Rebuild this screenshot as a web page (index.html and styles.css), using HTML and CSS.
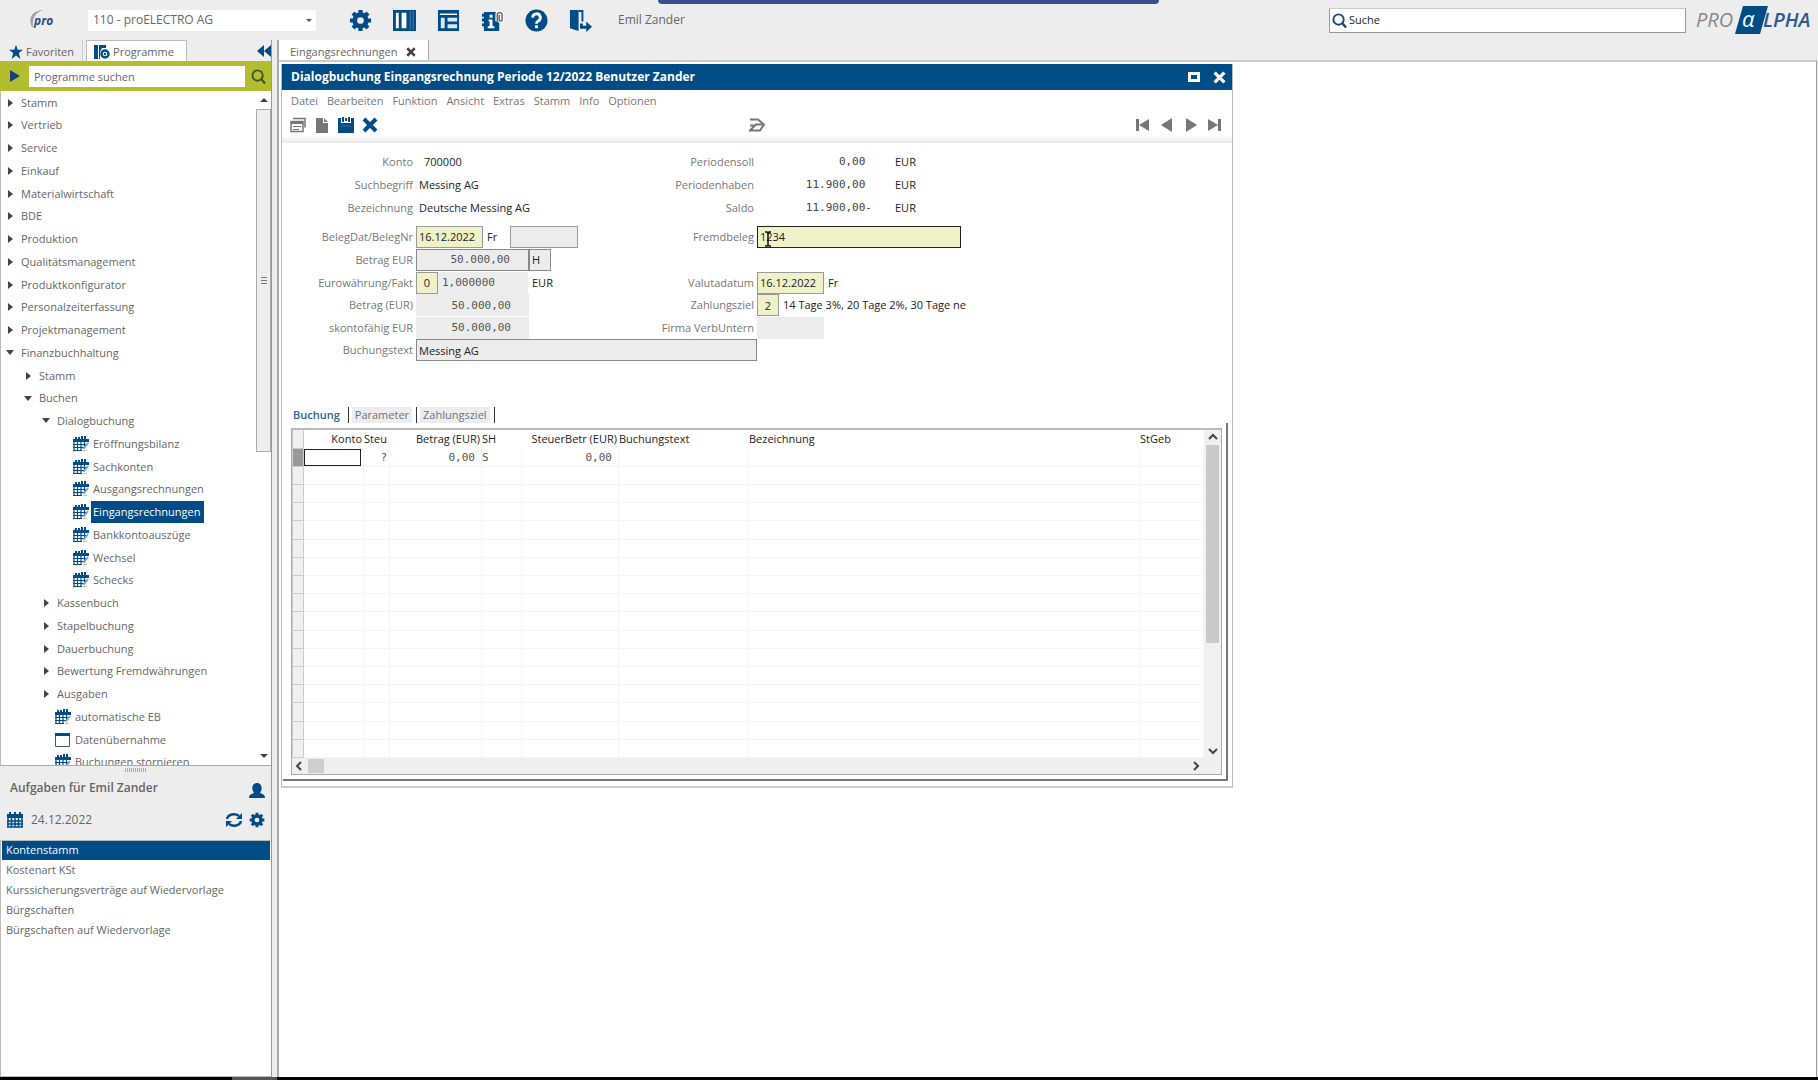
FILE: index.html
```html
<!DOCTYPE html>
<html lang="de">
<head>
<meta charset="utf-8">
<title>proALPHA – Eingangsrechnungen</title>
<link rel="stylesheet" href="styles.css">
</head>
<body>
<svg class="defs" aria-hidden="true">
  <symbol id="gear" viewBox="0 0 24 24">
    <circle cx="12" cy="12" r="6" fill="none" stroke="currentColor" stroke-width="5"/>
    <path d="M12 1v5M12 18v5M1 12h5M18 12h5M4.2 4.2l3.600 3.600M16.200 16.200l3.600 3.600M19.800 4.200l-3.600 3.600M4.200 19.800l3.600-3.600" stroke="currentColor" stroke-width="4.400"/>
  </symbol>
  <symbol id="calpen" viewBox="0 0 16 16">
    <path d="M0 3h16v3H0zM2 1h2v2H2zM5 1h2v2H5zM8 0h2v3H8zM11 0h2v3h-2z" fill="#004c86"/>
    <path d="M1 6v9M4.500 6v9M8 6v9M11.500 6v5M0 8.500h15M0 11.500h12M0 14.500h9" stroke="#004c86" stroke-width="1.200"/>
    <path d="M10.500 13l4.500-6" stroke="#7fa8d8" stroke-width="2"/>
    <path d="M10 15l4-1" stroke="#e0b070"/>
  </symbol>
  <symbol id="calendar" viewBox="0 0 16 16">
    <path d="M0 2h16v4H0zM2 0h2v3H2zM7 0h2v3H7zM12 0h2v3h-2z" fill="#004c86"/>
    <path d="M1 6v9.500M4.500 6v9.500M8 6v9.500M11.500 6v9.500M15 6v9.500M0 9h16M0 12h16M0 15h16" stroke="#004c86" stroke-width="1.500"/>
  </symbol>
  <symbol id="lens" viewBox="0 0 16 16">
    <circle cx="7" cy="7" r="5.500" fill="none" stroke="currentColor" stroke-width="2"/>
    <path d="M11 11l4 4.500" stroke="currentColor" stroke-width="2.500"/>
  </symbol>
  <symbol id="cross" viewBox="0 0 16 16">
    <path d="M2 2l12 12M14 2L2 14" stroke="currentColor" stroke-width="4"/>
  </symbol>
</svg>

<div class="capture-strip"></div>

<header class="topbar">
  <svg class="pro-logo" viewBox="0 0 30 22" role="img" aria-label="pro">
    <path d="M4 18C0 10 3 2 15 1C7 4 4 9 5 18z" fill="#9aa3ab"/>
    <text x="6" y="16" class="pro-text">pro</text>
  </svg>
  <div class="company">
    <select aria-label="Firma"><option>110 - proELECTRO AG</option></select>
  </div>
  <nav class="top-icons" aria-label="Werkzeuge">
    <button aria-label="Einstellungen"><svg viewBox="0 0 24 24"><use href="#gear"/></svg></button>
    <button aria-label="Spaltenansicht"><svg viewBox="0 0 24 24"><path d="M0 1h24v22H0z" fill="#004c86"/><path d="M3 4h3v16H3zM9 4h5v16H9z" fill="#fff"/><path d="M18 2v20M21 2v20" stroke="#4f7ea8"/></svg></button>
    <button aria-label="Layout"><svg viewBox="0 0 24 24"><path d="M1 1h22v22H1z" fill="#004c86"/><path d="M3 5.500h18" stroke="#fff" stroke-width="1.500"/><path d="M4 9h4v11H4zM11 9h10v4H11zM11 16h10v4H11z" fill="#dce7f0"/></svg></button>
    <button aria-label="Information"><svg viewBox="0 0 24 24"><path d="M3 3h16v20H3zM1 5h3v3H1zM1 10h3v3H1zM1 15h3v3H1z" fill="#004c86"/><path d="M8 11h4v7h2v2H7v-2h2v-5H8zM9 6h3v3H9z" fill="#fff"/><path d="M17 13V5a3 3 0 0 1 5 0v7a2 2 0 0 1-3 0V6" fill="none" stroke="#fff" stroke-width="4"/><path d="M17 13V5a3 3 0 0 1 5 0v7a2 2 0 0 1-3 0V6" fill="none" stroke="#666" stroke-width="1.500"/></svg></button>
    <button aria-label="Hilfe"><svg viewBox="0 0 24 24"><circle cx="12" cy="12" r="11.500" fill="#004c86"/><path d="M8 9a4 4 0 1 1 5.500 3.700C12 13.500 12 14 12 15.500" fill="none" stroke="#fff" stroke-width="3"/><path d="M10.500 17h3v3h-3z" fill="#fff"/></svg></button>
    <button aria-label="Abmelden"><svg viewBox="0 0 24 24"><path d="M1 1h9v22l-9-3z" fill="#004c86"/><path d="M10 1h5v12h-2V3h-3z" fill="#004c86"/><path d="M13 15v4h6" fill="none" stroke="#004c86" stroke-width="3"/><path d="M18 13l6 5.500-6 5.500z" fill="#004c86"/></svg></button>
  </nav>
  <span class="user">Emil Zander</span>
  <label class="global-search">
    <svg viewBox="0 0 16 16"><use href="#lens"/></svg>
    <input type="text" value="Suche" aria-label="Suche">
  </label>
  <svg class="brand" viewBox="0 0 120 36" role="img" aria-label="proALPHA">
    <path d="M47 4h25l-8 28H39z" fill="#004c86"/>
    <text x="0" y="25" class="brand-pro">PRO</text>
    <text x="46" y="25" class="brand-alpha">α</text>
    <text x="67" y="25" class="brand-lpha">LPHA</text>
  </svg>
</header>

<div class="shell">
  <aside class="sidebar">
    <div class="side-tabs">
      <button class="side-tab"><svg viewBox="0 0 16 16"><path d="M8 0l2 5.500h6l-4.800 3.700L13 16l-5-4-5 4 1.800-6.800L0 5.500h6z" fill="#004c86"/></svg>Favoriten</button>
      <button class="side-tab active"><svg viewBox="0 0 16 16"><path d="M0 1h4v14H0zM5 1h7v3H8l-2 4v7H5z" fill="#004c86"/><circle cx="11" cy="10" r="3.500" fill="#fff" stroke="#004c86" stroke-width="2.500"/><circle cx="11" cy="10" r="1.200" fill="#004c86"/></svg>Programme</button>
      <button class="collapse" aria-label="Einklappen"><svg viewBox="0 0 14 12"><path d="M7 0v12L0 6zM14 0v12L7 6z" fill="#004c86"/></svg></button>
    </div>
    <div class="prog-search">
      <button aria-label="Start"><svg viewBox="0 0 12 14"><path d="M1 1l10 6-10 6z" fill="#1c3f78"/></svg></button>
      <input type="text" value="Programme suchen" aria-label="Programme suchen">
      <button class="find" aria-label="Suchen"><svg viewBox="0 0 16 16"><use href="#lens"/></svg></button>
    </div>
    <div class="tree-box">
      <ul class="tree">
        <li><i class="arrow"></i><span>Stamm</span></li>
        <li><i class="arrow"></i><span>Vertrieb</span></li>
        <li><i class="arrow"></i><span>Service</span></li>
        <li><i class="arrow"></i><span>Einkauf</span></li>
        <li><i class="arrow"></i><span>Materialwirtschaft</span></li>
        <li><i class="arrow"></i><span>BDE</span></li>
        <li><i class="arrow"></i><span>Produktion</span></li>
        <li><i class="arrow"></i><span>Qualitätsmanagement</span></li>
        <li><i class="arrow"></i><span>Produktkonfigurator</span></li>
        <li><i class="arrow"></i><span>Personalzeiterfassung</span></li>
        <li><i class="arrow"></i><span>Projektmanagement</span></li>
        <li><i class="arrow open"></i><span>Finanzbuchhaltung</span></li>
        <li class="l1"><i class="arrow"></i><span>Stamm</span></li>
        <li class="l1"><i class="arrow open"></i><span>Buchen</span></li>
        <li class="l2"><i class="arrow open"></i><span>Dialogbuchung</span></li>
        <li class="l4"><svg><use href="#calpen"/></svg><span>Eröffnungsbilanz</span></li>
        <li class="l4"><svg><use href="#calpen"/></svg><span>Sachkonten</span></li>
        <li class="l4"><svg><use href="#calpen"/></svg><span>Ausgangsrechnungen</span></li>
        <li class="l4"><svg><use href="#calpen"/></svg><span class="selected">Eingangsrechnungen</span></li>
        <li class="l4"><svg><use href="#calpen"/></svg><span>Bankkontoauszüge</span></li>
        <li class="l4"><svg><use href="#calpen"/></svg><span>Wechsel</span></li>
        <li class="l4"><svg><use href="#calpen"/></svg><span>Schecks</span></li>
        <li class="l2"><i class="arrow"></i><span>Kassenbuch</span></li>
        <li class="l2"><i class="arrow"></i><span>Stapelbuchung</span></li>
        <li class="l2"><i class="arrow"></i><span>Dauerbuchung</span></li>
        <li class="l2"><i class="arrow"></i><span>Bewertung Fremdwährungen</span></li>
        <li class="l2"><i class="arrow"></i><span>Ausgaben</span></li>
        <li class="l3"><svg><use href="#calpen"/></svg><span>automatische EB</span></li>
        <li class="l3"><svg viewBox="0 0 16 16"><path d="M.5 1.500h14v13H.5z" fill="#fff" stroke="#345c86"/><path d="M0 1h15v3H0z" fill="#004c86"/></svg><span>Datenübernahme</span></li>
        <li class="l3"><svg><use href="#calpen"/></svg><span>Buchungen stornieren</span></li>
      </ul>
      <div class="tree-scroll">
        <i class="tri up"></i>
        <div class="tree-thumb"><i></i><i></i><i></i></div>
        <i class="tri down"></i>
      </div>
    </div>
    <div class="splitter"></div>
    <section class="tasks">
      <div class="tasks-head">
        <h2>Aufgaben für Emil Zander</h2>
        <svg viewBox="0 0 16 16"><path d="M0 15c0-4 3-4 5-5C2 6 3 0 8 0s6 6 3 10c2 1 5 1 5 5z" fill="#004c86"/></svg>
      </div>
      <div class="tasks-date">
        <svg viewBox="0 0 16 16"><use href="#calendar"/></svg>
        <time>24.12.2022</time>
        <button aria-label="Aktualisieren"><svg viewBox="0 0 16 16"><path d="M1 7c1-5 8-6 12-3M15 9c-1 5-8 6-12 3" fill="none" stroke="#004c86" stroke-width="2.500"/><path d="M16 1v6h-6zM0 15V9h6z" fill="#004c86"/></svg></button>
        <button aria-label="Einstellungen"><svg viewBox="0 0 24 24"><use href="#gear"/></svg></button>
      </div>
      <ul class="task-list">
        <li class="current">Kontenstamm</li>
        <li>Kostenart KSt</li>
        <li>Kurssicherungsverträge auf Wiedervorlage</li>
        <li>Bürgschaften</li>
        <li>Bürgschaften auf Wiedervorlage</li>
      </ul>
    </section>
  </aside>

  <main class="work">
    <div class="doc-tabs">
      <button class="doc-tab">Eingangsrechnungen <svg viewBox="0 0 16 16"><use href="#cross"/></svg></button>
    </div>
    <div class="desktop">
      <section class="window">
        <div class="titlebar">
          <h1>Dialogbuchung Eingangsrechnung Periode 12/2022 Benutzer Zander</h1>
          <button aria-label="Maximieren"><svg viewBox="0 0 12 10"><path d="M1.500 1.500h9v7h-9z" fill="none" stroke="#fff" stroke-width="3"/></svg></button>
          <button aria-label="Schließen"><svg viewBox="0 0 16 16"><use href="#cross"/></svg></button>
        </div>
        <div class="menubar">
          <button>Datei</button><button>Bearbeiten</button><button>Funktion</button><button>Ansicht</button><button>Extras</button><button>Stamm</button><button>Info</button><button>Optionen</button>
        </div>
        <div class="toolbar">
          <button aria-label="Neu"><svg viewBox="0 0 16 16"><path d="M3 1.500h12v9M1 4.500h12v10H1z" fill="none" stroke="#777" stroke-width="1.500"/><path d="M1 5h12v2H1zM3 9h8v1H3zM3 12h6v1H3z" fill="#777"/></svg></button>
          <button aria-label="Dokument"><svg viewBox="0 0 16 16"><path d="M2 1h7v5h5v10H2zM10 1l4 4h-4z" fill="#777"/></svg></button>
          <button aria-label="Speichern"><svg viewBox="0 0 16 16"><path d="M0 1h3v5h10V1h3v15H0z" fill="#004c86"/><path d="M4 0h2v5H4zM10 0h2v5h-2zM7 1h2v3H7z" fill="#004c86"/><path d="M3 9h10" stroke="#2f6da3"/></svg></button>
          <button aria-label="Löschen"><svg viewBox="0 0 16 16" class="blue"><use href="#cross"/></svg></button>
          <button class="flow" aria-label="Ablauf"><svg viewBox="0 0 16 14"><path d="M1 1.500h8l6 5-4 6H1l5-5H1" fill="none" stroke="#777" stroke-width="2"/><path d="M6 6.500h9" stroke="#777" stroke-width="2"/></svg></button>
          <div class="record-nav">
            <button aria-label="Erster"><svg viewBox="0 0 14 14"><path d="M0 1h3v12H0zM13 1v12L3 7z" fill="#777"/></svg></button>
            <button aria-label="Vorheriger"><svg viewBox="0 0 14 14"><path d="M12 0v14L1 7z" fill="#777"/></svg></button>
            <button aria-label="Nächster"><svg viewBox="0 0 14 14"><path d="M2 0v14l11-7z" fill="#777"/></svg></button>
            <button aria-label="Letzter"><svg viewBox="0 0 14 14"><path d="M10 1h3v12h-3zM0 1v12l10-6z" fill="#777"/></svg></button>
          </div>
        </div>

        <form class="form">
          <div class="row"><span class="lbl">Konto</span><div class="fld"><output class="in">700000</output></div><span class="lbl">Periodensoll</span><div class="fld"><output class="sum">0,00&nbsp;</output><span>EUR</span></div></div>
          <div class="row"><span class="lbl">Suchbegriff</span><div class="fld"><output>Messing AG</output></div><span class="lbl">Periodenhaben</span><div class="fld"><output class="sum">11.900,00&nbsp;</output><span>EUR</span></div></div>
          <div class="row"><span class="lbl">Bezeichnung</span><div class="fld"><output>Deutsche Messing AG</output></div><span class="lbl">Saldo</span><div class="fld"><output class="sum">11.900,00-</output><span>EUR</span></div></div>
          <div class="row gap"><label class="lbl" for="beleg">BelegDat/BelegNr</label><div class="fld"><input id="beleg" class="date" value="16.12.2022"><span class="day">Fr</span><input class="nr" aria-label="BelegNr"></div><label class="lbl" for="fremd">Fremdbeleg</label><div class="fld"><input id="fremd" class="fremd" value="1234"><svg class="caret" viewBox="0 0 8 16"><path d="M1 1h2l1 1 1-1h2M4 2v12M1 15h2l1-1 1 1h2" fill="none" stroke="#111" stroke-width="1.500"/></svg></div></div>
          <div class="row"><label class="lbl" for="betrag">Betrag EUR</label><div class="fld"><input id="betrag" class="amount framed" value="50.000,00"><input class="sh" aria-label="Soll/Haben" value="H"></div></div>
          <div class="row"><label class="lbl" for="waehr">Eurowährung/Fakt</label><div class="fld"><input id="waehr" class="code" value="0"><input class="factor" aria-label="Faktor" value="1,000000"><span class="day">EUR</span></div><label class="lbl" for="valuta">Valutadatum</label><div class="fld"><input id="valuta" class="date" value="16.12.2022"><span class="day">Fr</span></div></div>
          <div class="row tight"><label class="lbl" for="betrag2">Betrag (EUR)</label><div class="fld"><input id="betrag2" class="amount" value="50.000,00"></div><label class="lbl" for="ziel">Zahlungsziel</label><div class="fld"><input id="ziel" class="code" value="2"><span class="day">14 Tage 3%, 20 Tage 2%, 30 Tage ne</span></div></div>
          <div class="row"><label class="lbl" for="skonto">skontofähig EUR</label><div class="fld"><input id="skonto" class="amount" value="50.000,00"></div><label class="lbl" for="firma">Firma VerbUntern</label><div class="fld"><input id="firma" class="firma"></div></div>
          <div class="row tight"><label class="lbl" for="text">Buchungstext</label><div class="fld wide"><input id="text" class="btext" value="Messing AG"></div></div>
        </form>

        <div class="detail-tabs">
          <button class="on">Buchung</button><button>Parameter</button><button>Zahlungsziel</button>
        </div>
        <div class="detail">
          <div class="grid-box">
            <div class="grid-main">
              <table class="grid">
                <colgroup><col class="c-mark"><col class="c-konto"><col class="c-steu"><col class="c-betrag"><col class="c-sh"><col class="c-sbetr"><col class="c-text"><col class="c-bez"><col></colgroup>
                <thead><tr><th class="mark"></th><th class="r">Konto</th><th>Steu</th><th class="r">Betrag (EUR)</th><th>SH</th><th class="r">SteuerBetr (EUR)</th><th>Buchungstext</th><th>Bezeichnung</th><th>StGeb</th></tr></thead>
                <tbody>
                  <tr><td class="mark cur"></td><td class="edit"><input aria-label="Konto"></td><td class="r q">?</td><td class="r m">0,00</td><td class="m">S</td><td class="r m">0,00</td><td></td><td></td><td></td></tr>
                  <tr><td class="mark"></td><td></td><td></td><td></td><td></td><td></td><td></td><td></td><td></td></tr>
                  <tr><td class="mark"></td><td></td><td></td><td></td><td></td><td></td><td></td><td></td><td></td></tr>
                  <tr><td class="mark"></td><td></td><td></td><td></td><td></td><td></td><td></td><td></td><td></td></tr>
                  <tr><td class="mark"></td><td></td><td></td><td></td><td></td><td></td><td></td><td></td><td></td></tr>
                  <tr><td class="mark"></td><td></td><td></td><td></td><td></td><td></td><td></td><td></td><td></td></tr>
                  <tr><td class="mark"></td><td></td><td></td><td></td><td></td><td></td><td></td><td></td><td></td></tr>
                  <tr><td class="mark"></td><td></td><td></td><td></td><td></td><td></td><td></td><td></td><td></td></tr>
                  <tr><td class="mark"></td><td></td><td></td><td></td><td></td><td></td><td></td><td></td><td></td></tr>
                  <tr><td class="mark"></td><td></td><td></td><td></td><td></td><td></td><td></td><td></td><td></td></tr>
                  <tr><td class="mark"></td><td></td><td></td><td></td><td></td><td></td><td></td><td></td><td></td></tr>
                  <tr><td class="mark"></td><td></td><td></td><td></td><td></td><td></td><td></td><td></td><td></td></tr>
                  <tr><td class="mark"></td><td></td><td></td><td></td><td></td><td></td><td></td><td></td><td></td></tr>
                  <tr><td class="mark"></td><td></td><td></td><td></td><td></td><td></td><td></td><td></td><td></td></tr>
                  <tr><td class="mark"></td><td></td><td></td><td></td><td></td><td></td><td></td><td></td><td></td></tr>
                  <tr><td class="mark"></td><td></td><td></td><td></td><td></td><td></td><td></td><td></td><td></td></tr>
                  <tr><td class="mark"></td><td></td><td></td><td></td><td></td><td></td><td></td><td></td><td></td></tr>
                </tbody>
              </table>
              <div class="vscroll">
                <svg viewBox="0 0 10 10"><path d="M1 7l4-4 4 4"/></svg>
                <div class="vthumb"></div>
                <svg viewBox="0 0 10 10"><path d="M1 3l4 4 4-4"/></svg>
              </div>
            </div>
            <div class="hscroll">
              <svg viewBox="0 0 10 10"><path d="M7 1L3 5l4 4"/></svg>
              <div class="hthumb"></div>
              <svg viewBox="0 0 10 10"><path d="M3 1l4 4-4 4"/></svg>
            </div>
          </div>
        </div>
      </section>
    </div>
  </main>
</div>
<footer class="bottom"><i></i></footer>
</body>
</html>
```

FILE: styles.css
```css
* { box-sizing: border-box; }

body {
  margin: 0;
  height: 100vh;
  display: flex;
  flex-direction: column;
  overflow: hidden;
  background: #ededed;
  color: #666;
  font: 11px/16px "Open Sans", "Noto Sans", sans-serif;
}

button {
  padding: 0;
  border: 0;
  background: none;
  color: inherit;
  font: inherit;
  white-space: nowrap;
}

input, select {
  margin: 0;
  padding: 0;
  border: 0;
  border-radius: 0;
  background: none;
  color: inherit;
  font: inherit;
  outline: 0;
  min-width: 0;
}

svg { display: block; flex: none; }
ul { margin: 0; padding: 0; list-style: none; }
h1, h2 { margin: 0; }
.defs { position: absolute; width: 0; height: 0; }

.capture-strip {
  position: absolute;
  top: 0;
  left: 658px;
  width: 501px;
  height: 4px;
  background: #38508c;
  border-radius: 0 0 4px 4px;
}

/* top bar */
.topbar {
  display: flex;
  align-items: center;
  height: 40px;
  flex: none;
  padding-right: 2px;
}
.pro-logo { width: 30px; height: 22px; margin-left: 28px; }
.pro-text { font: italic bold 12px "Open Sans", sans-serif; fill: #2d4a7a; }
.company {
  width: 228px;
  height: 21px;
  margin-left: 30px;
  background: #fff;
  position: relative;
}
.company::after {
  content: "";
  position: absolute;
  right: 4px;
  top: 9px;
  border: 3px solid transparent;
  border-top-color: #555;
}
.company select {
  appearance: none;
  width: 100%;
  height: 21px;
  padding-left: 5px;
  font-size: 12px;
}
.top-icons { display: flex; align-items: center; gap: 21px; margin-left: 33px; color: #004c86; }
.top-icons svg { width: 23px; height: 23px; }
.user { margin-left: 26px; font-size: 12px; }
.global-search {
  display: flex;
  align-items: center;
  gap: 2px;
  width: 357px;
  height: 25px;
  margin: 0 10px 0 auto;
  padding: 0 2px;
  background: #fff;
  border: 1px solid #999;
  border-top-color: #ccc;
  color: #222;
}
.global-search svg { width: 15px; height: 15px; color: #1d4675; }
.global-search input { flex: 1; }
.brand { width: 120px; height: 36px; }
.brand-pro { font: italic 20px "Open Sans", sans-serif; fill: #888; }
.brand-alpha { font: italic 22px "Open Sans", sans-serif; fill: #fff; }
.brand-lpha { font: italic 600 20px "Open Sans", sans-serif; fill: #2a5a90; }

/* shell */
.shell { flex: 1; min-height: 0; display: flex; }
.sidebar {
  width: 272px;
  flex: none;
  display: flex;
  flex-direction: column;
  border-right: 1px solid #999;
}
.side-tabs { display: flex; height: 21px; flex: none; }
.side-tab {
  display: flex;
  align-items: center;
  gap: 3px;
  padding: 2px 8px 0 9px;
  border-right: 1px solid #ccc;
}
.side-tab svg { width: 14px; height: 14px; }
.side-tab.active {
  margin-left: 3px;
  padding: 2px 12px 0 7px;
  background: #fff;
  border: 1px solid #bbb;
  border-bottom: 0;
}
.side-tab.active svg { width: 16px; height: 16px; }
.collapse { margin-left: auto; }
.collapse svg { width: 14px; height: 12px; }
.prog-search {
  display: flex;
  align-items: center;
  height: 30px;
  flex: none;
  padding: 0 5px 0 9px;
  background: #b2bd30;
}
.prog-search svg { width: 12px; height: 14px; }
.prog-search input {
  flex: 1;
  height: 21px;
  margin: 0 6px 0 8px;
  padding-left: 5px;
  background: #fff;
}
.prog-search .find { color: #3c5632; }
.prog-search .find svg { width: 15px; height: 15px; }

/* program tree */
.tree-box {
  display: flex;
  flex: 0 1 675px;
  min-height: 0;
  overflow: hidden;
  background: #fff;
  border-left: 1px solid #bbb;
  border-bottom: 1px solid #aaa;
}
.tree { flex: 1; }
.tree li { display: flex; align-items: center; height: 23px; padding-left: 5px; white-space: nowrap; }
.tree li:nth-child(4n + 2) { height: 22px; }
.tree .l1 { padding-left: 23px; }
.tree .l2 { padding-left: 41px; }
.tree .l3 { padding-left: 54px; }
.tree .l4 { padding-left: 72px; }
.tree svg { width: 16px; height: 16px; margin-right: 2px; }
.tree span { padding: 0 2px; line-height: 22px; }
.tree .selected { padding-right: 3px; background: #004c86; color: #fff; }
.arrow { width: 13px; flex: none; }
.arrow::before {
  content: "";
  display: block;
  width: 0;
  margin-left: 2px;
  border: 4px solid transparent;
  border-left: 5px solid #444;
  border-right: 0;
}
.arrow.open::before {
  margin-left: 0;
  border: 4px solid transparent;
  border-top: 5px solid #444;
  border-bottom: 0;
}
.tree-scroll { width: 15px; flex: none; display: flex; flex-direction: column; align-items: center; }
.tri { margin: 7px 0; border: 4px solid transparent; }
.tri.up { border-top: 0; border-bottom-color: #444; }
.tri.down { margin-top: auto; border-bottom: 0; border-top-color: #444; }
.tree-thumb {
  width: 15px;
  height: 343px;
  display: flex;
  flex-direction: column;
  align-items: center;
  justify-content: center;
  gap: 2px;
  background: #eee;
  border: 1px solid #aaa;
}
.tree-thumb i { width: 6px; height: 1px; background: #777; }

.splitter { height: 7px; flex: none; }
.splitter::after {
  content: "";
  display: block;
  width: 22px;
  height: 4px;
  margin: 2px auto;
  background: repeating-linear-gradient(90deg, #aaa 0 1px, transparent 1px 2px);
}

/* tasks */
.tasks { flex: 1; display: flex; flex-direction: column; }
.tasks-head { display: flex; align-items: center; justify-content: space-between; height: 30px; padding: 0 6px 0 10px; }
.tasks-head h2 { font-size: 12px; font-weight: 600; line-height: 20px; }
.tasks-head svg { width: 16px; height: 16px; margin-top: 5px; }
.tasks-date { display: flex; align-items: center; height: 34px; padding: 0 6px 0 7px; font-size: 12px; color: #004c86; }
.tasks-date time { margin: 0 auto 0 8px; color: #666; }
.tasks-date svg { width: 16px; height: 16px; }
.tasks-date button + button { margin-left: 7px; }
.task-list { flex: 1; margin-top: 3px; padding: 0 1px; background: #fff; border: 1px solid #bbb; border-right: 0; }
.task-list li { height: 20px; padding: 0 4px; line-height: 20px; }
.task-list .current { height: 19px; background: #004c86; color: #fff; line-height: 18px; }

/* work area */
.work { flex: 1; min-width: 0; display: flex; flex-direction: column; margin: 0 1px 0 5px; border-left: 2px solid #aaa; }
.doc-tabs { display: flex; height: 20px; flex: none; }
.doc-tab { display: flex; align-items: center; gap: 8px; padding: 3px 12px 0 11px; background: #fff; border-right: 1px solid #aaa; }
.doc-tab svg { width: 10px; height: 10px; color: #444; }
.desktop { flex: 1; min-height: 0; padding: 2px; background: #fff; border-top: 2px solid #ccc; border-right: 1px solid #999; }

/* dialog window */
.window {
  width: 952px;
  max-width: 100%;
  background: #fff;
  border: 1px solid #bbb;
  border-top: 0;
  border-bottom: 2px solid #ccc;
}
.titlebar { display: flex; align-items: center; gap: 13px; height: 26px; padding: 0 6px 0 9px; background: #004c86; color: #fff; }
.titlebar h1 { flex: 1; font-size: 12px; line-height: 24px; }
.titlebar svg { width: 12px; height: 10px; }
.titlebar button:last-child svg { width: 13px; height: 13px; }
.menubar { display: flex; gap: 9px; height: 22px; padding: 0 9px; line-height: 20px; color: #777; }
.toolbar { display: flex; align-items: center; gap: 8px; height: 31px; padding: 0 10px 6px 8px; background: linear-gradient(#fff 24px, #e8e8e8); }
.toolbar svg { width: 16px; height: 16px; }
.toolbar .blue { color: #004c86; }
.toolbar .flow { margin-left: 363px; }
.toolbar .flow svg { height: 14px; }
.record-nav { display: flex; gap: 10px; margin-left: auto; }
.record-nav svg { width: 14px; height: 14px; }

/* booking form */
.form { padding-top: 7px; color: #222; }
.row { display: grid; grid-template-columns: 131px 210px 125px 1fr; column-gap: 3px; align-items: center; height: 23px; }
.row.gap { margin-top: 6px; }
.row.tight { height: 22px; }
.lbl { text-align: right; color: #777; white-space: nowrap; }
.fld { display: flex; align-items: center; position: relative; white-space: nowrap; }
.fld.wide { grid-column: 2 / 5; }
.fld output { padding-left: 3px; }
.fld output.in { padding-left: 8px; }
.fld output.sum { width: 115px; margin-right: 23px; padding: 0; text-align: right; font-family: "DejaVu Sans Mono", monospace; color: #444; }
.fld input { height: 22px; padding: 0 2px; background: #ececec; }
.day { margin-left: 4px; }
.fld .date, .fld .code, .fld .fremd { background: #eff2c8; border: 1px solid #999; }
.fld .date { width: 67px; }
.fld .code { width: 22px; text-align: center; }
.fld .nr { width: 68px; margin-left: 13px; border: 1px solid #999; }
.fld .fremd { width: 204px; border-color: #222; }
.fld .amount { width: 113px; padding-right: 18px; text-align: right; font-family: "DejaVu Sans Mono", monospace; color: #555; }
.fld .framed, .fld .sh, .fld .btext { border: 1px solid #888; }
.fld .sh { width: 22px; }
.fld .factor { width: 90px; padding-left: 4px; font-family: "DejaVu Sans Mono", monospace; color: #555; }
.fld .firma { width: 67px; }
.fld .btext { width: 341px; }
.caret { position: absolute; left: 7px; top: 5px; width: 8px; height: 16px; }

/* detail tabs and grid */
.detail-tabs { display: flex; height: 16px; margin: 46px 0 0 9px; color: #6a7284; }
.detail-tabs button { padding: 0 3px; margin-right: 2px; background: #ededed; box-shadow: 4px 0 #fff, 5px 0 #333; }
.detail-tabs button + button { margin-left: 6px; }
.detail-tabs .on { padding: 0 4px 0 2px; background: #fff; color: #2c5f94; font-weight: 600; }
.detail { margin: 0 4px 5px 1px; padding: 5px 4px 4px 8px; border-right: 2px solid #777; border-bottom: 2px solid #777; }
.grid-box { border: 1px solid #aaa; border-top: 2px solid #bbb; }
.grid-main { display: flex; height: 328px; overflow: hidden; }
.grid { flex: 1; table-layout: fixed; border-collapse: collapse; color: #222; }
.grid tr { height: 18px; }
.grid th, .grid td { height: 18px; padding: 0 2px; border: 1px solid #f4f4f4; border-top: 0; font-weight: 400; line-height: 17px; text-align: left; white-space: nowrap; }
.grid thead th { border-color: #fff; }
.grid th.r { padding-right: 1px; }
.grid th:not(.r) { padding-left: 0; }
.grid .r { text-align: right; }
.grid .m { padding-left: 0; padding-right: 6px; font-family: "DejaVu Sans Mono", monospace; color: #555; }
.grid .q { padding-right: 2px; font-family: "DejaVu Sans Mono", monospace; color: #555; }
.grid .mark { background: #f0f0f0; border: 1px solid #ccc; border-top: 0; }
.grid .cur { background: #999; }
.grid .edit { padding: 0 2px 0 0; }
.edit input { display: block; width: 100%; height: 17px; border: 1px solid #222; }
.c-mark { width: 11px; }
.c-konto { width: 60px; }
.c-steu { width: 26px; }
.c-betrag { width: 92px; }
.c-sh { width: 40px; }
.c-sbetr { width: 97px; }
.c-text { width: 130px; }
.c-bez { width: 391px; }
.vscroll { width: 17px; flex: none; display: flex; flex-direction: column; align-items: center; padding: 2px 0; background: #f0f0f0; }
.vscroll svg, .hscroll svg { width: 10px; height: 10px; fill: none; stroke: #444; stroke-width: 2; }
.vthumb { width: 13px; height: 198px; margin: 3px 0 auto; background: #cacaca; }
.hscroll { display: flex; align-items: center; height: 16px; padding: 0 20px 0 2px; background: #efefef; }
.hthumb { width: 16px; height: 14px; margin: 0 auto 0 4px; background: #cecece; }

.bottom { height: 3px; flex: none; padding-left: 232px; background: #000; }
.bottom i { display: block; width: 45px; height: 3px; background: #555; }
```
